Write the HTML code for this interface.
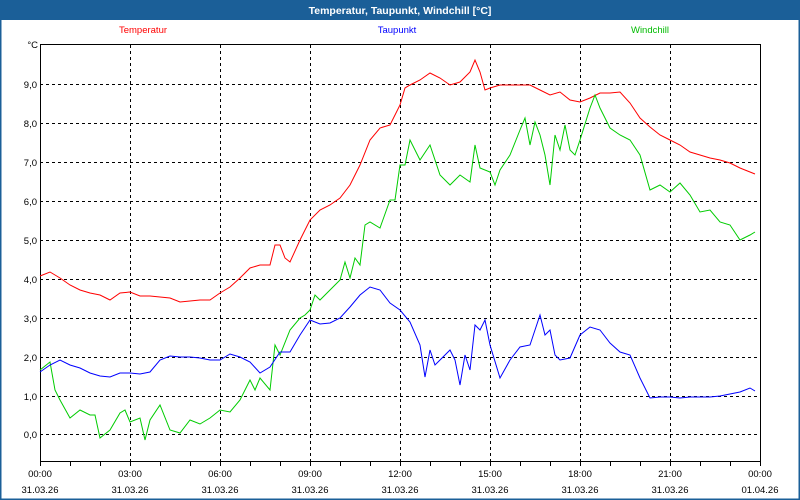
<!DOCTYPE html>
<html><head><style>
html,body{margin:0;padding:0;background:#fff}
#w{position:relative;width:800px;height:500px;overflow:hidden;background:#fff}
</style></head><body><div id="w">
<svg width="800" height="500" xmlns="http://www.w3.org/2000/svg" font-family="Liberation Sans, sans-serif" font-size="9.5">
<rect x="0" y="0" width="800" height="20" fill="#1b5f98"/>
<rect x="0.75" y="0.75" width="798.5" height="498.5" fill="none" stroke="#1b5f98" stroke-width="1.5"/>
<text x="400" y="14" text-anchor="middle" fill="#fff" font-weight="bold" font-size="10.5">Temperatur, Taupunkt, Windchill [°C]</text>
<text x="143" y="33" text-anchor="middle" fill="#ff0000">Temperatur</text>
<text x="397" y="33" text-anchor="middle" fill="#0000ff">Taupunkt</text>
<text x="650" y="33" text-anchor="middle" fill="#00bb00">Windchill</text>
<g stroke="#000" stroke-width="1" stroke-dasharray="3,3" fill="none">
<path d="M40 84.5H760M40 123.5H760M40 162.5H760M40 201.5H760M40 240.5H760M40 279.5H760M40 318.5H760M40 357.5H760M40 396.5H760M40 434.5H760"/>
<path d="M130.5 45V461M220.5 45V461M310.5 45V461M400.5 45V461M490.5 45V461M580.5 45V461M670.5 45V461"/>
</g>
<path d="M40.5 44.5H760.5V461.5H40.5Z" fill="none" stroke="#000" stroke-width="1"/>
<g stroke="#000"><path d="M40.5 461V466M70.5 461V466M100.5 461V466M130.5 461V466M160.5 461V466M190.5 461V466M220.5 461V466M250.5 461V466M280.5 461V466M310.5 461V466M340.5 461V466M370.5 461V466M400.5 461V466M430.5 461V466M460.5 461V466M490.5 461V466M520.5 461V466M550.5 461V466M580.5 461V466M610.5 461V466M640.5 461V466M670.5 461V466M700.5 461V466M730.5 461V466M760.5 461V466"/></g>
<g text-anchor="end" fill="#000">
<text x="38" y="48">°C</text><text x="37" y="88">9,0</text><text x="37" y="127">8,0</text><text x="37" y="166">7,0</text><text x="37" y="205">6,0</text><text x="37" y="244">5,0</text><text x="37" y="283">4,0</text><text x="37" y="322">3,0</text><text x="37" y="361">2,0</text><text x="37" y="400">1,0</text><text x="37" y="438">0,0</text>
</g>
<g text-anchor="middle" fill="#000">
<text x="40" y="477">00:00</text><text x="40" y="493">31.03.26</text>
<text x="130" y="477">03:00</text><text x="130" y="493">31.03.26</text>
<text x="220" y="477">06:00</text><text x="220" y="493">31.03.26</text>
<text x="310" y="477">09:00</text><text x="310" y="493">31.03.26</text>
<text x="400" y="477">12:00</text><text x="400" y="493">31.03.26</text>
<text x="490" y="477">15:00</text><text x="490" y="493">31.03.26</text>
<text x="580" y="477">18:00</text><text x="580" y="493">31.03.26</text>
<text x="670" y="477">21:00</text><text x="670" y="493">31.03.26</text>
<text x="760" y="477">00:00</text><text x="760" y="493">01.04.26</text>
</g>
<g fill="none" stroke-width="1">
<polyline stroke="#ff0000" points="40,276 50,272 60,278 70,285 80,290 90,293 100,295 110,300 120,293 130,292 140,296 150,296 160,297 170,298 180,302 190,301 200,300 210,300 220,293 230,287 240,278 250,268 260,265 270,265 275,245 280,245 285,258 290,262 300,240 310,220 320,210 330,205 340,198 350,185 360,165 370,140 380,128 390,125 395,115 400,105 405,88 410,85 420,80 430,73 440,78 450,85 460,82 470,72 475,60 480,72 485,90 490,88 500,85 510,85 520,85 530,85 540,90 550,95 560,92 570,100 580,102 590,98 600,93 610,93 620,92 630,103 640,118 650,127 660,135 670,140 680,145 690,152 700,155 710,158 720,160 730,163 740,168 750,172 755,174"/>
<polyline stroke="#00cc00" points="40,370 50,362 55,390 60,400 70,418 80,410 90,415 95,415 100,438 110,430 120,413 125,410 130,422 140,418 145,440 150,420 160,405 170,430 180,433 190,420 200,424 210,418 220,410 230,412 240,400 250,380 255,390 260,378 270,390 275,345 280,355 290,330 300,318 305,315 310,310 315,295 320,300 330,290 340,280 345,262 350,278 355,258 360,265 365,225 370,222 380,228 390,200 395,200 400,165 405,165 410,140 420,160 430,145 440,175 450,185 460,175 470,182 475,145 480,168 490,172 495,185 500,170 510,155 520,130 525,118 530,145 535,122 540,135 545,155 550,185 555,135 560,150 565,125 570,150 575,155 580,140 590,108 595,95 600,108 610,128 620,135 630,140 640,155 650,190 660,185 670,192 680,183 690,195 700,212 710,210 720,222 730,225 740,240 750,235 755,232"/>
<polyline stroke="#0000ff" points="40,372 50,365 60,360 70,365 80,368 90,373 100,376 110,377 120,373 130,373 140,374 150,372 160,360 170,356 180,357 190,357 200,358 210,360 220,360 230,354 240,357 250,362 260,373 270,367 280,352 290,352 300,335 310,320 320,324 330,323 340,318 350,307 360,295 370,287 380,290 390,303 400,310 410,322 420,345 425,377 430,350 435,365 440,360 450,350 455,360 460,385 465,355 470,370 475,325 480,330 485,320 490,345 500,378 510,360 520,347 530,345 540,315 545,335 550,330 555,355 560,360 570,358 580,335 590,327 600,330 610,343 620,352 630,355 640,378 650,398 660,397 670,397 680,398 690,397 700,397 710,397 720,396 730,394 740,392 750,388 755,391"/>
</g>
</svg>
</div></body></html>
